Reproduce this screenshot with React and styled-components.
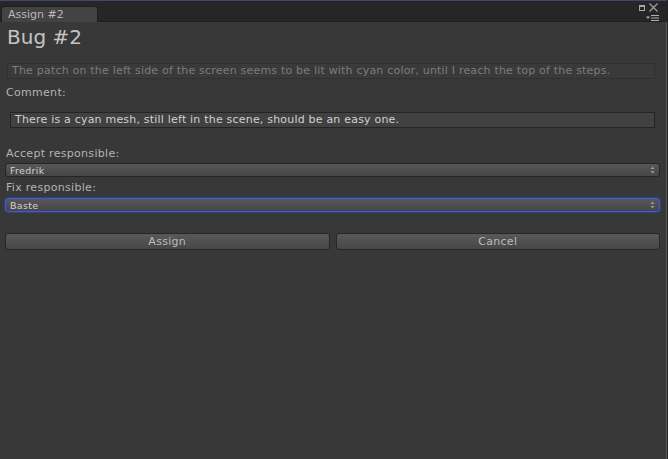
import React from "react";
import styled, { createGlobalStyle } from "styled-components";

const Global = createGlobalStyle`
  html, body { margin: 0; padding: 0; background: #383838; }
  body { font-family: "DejaVu Sans", Verdana, sans-serif; }
  * { box-sizing: border-box; }
`;

const Window = styled.div`
  width: 668px;
  height: 459px;
  display: flex;
  flex-direction: column;
  background: #383838;
  border-right: 1px solid #232323;
  overflow: hidden;
`;

const TopBar = styled.div`
  height: 22px;
  flex: none;
  display: flex;
  align-items: flex-end;
  justify-content: space-between;
  background: #262626;
  border-top: 1px solid #3b4a66;
  border-bottom: 1px solid #1f1f1f;
  padding-left: 1px;
`;

const Tab = styled.div`
  width: 97px;
  height: 16px;
  background: #434343;
  border: 1px solid #1e1e1e;
  border-bottom: none;
  border-radius: 3px 3px 0 0;
  color: #b8b8b8;
  font-size: 11px;
  line-height: 15px;
  padding-left: 6px;
  margin-bottom: -1px;
`;

const WinIcons = styled.div`
  align-self: stretch;
  width: 34px;
  position: relative;
`;

const IconSvg = styled.svg`
  position: absolute;
  left: ${(p) => p.$x}px;
  top: ${(p) => p.$y}px;
`;

const Content = styled.div`
  flex: 1;
  display: flex;
  flex-direction: column;
  padding: 3px 6px 0 5px;
  border-right: 1px solid #5a5a5a;
`;

const Title = styled.div`
  color: #c4c4c4;
  font-size: 20px;
  line-height: 24px;
  padding-left: 2px;
  margin-bottom: 14px;
`;

const Field = styled.div`
  height: 16px;
  margin-left: ${(p) => p.$indent}px;
  margin-right: 5px;
  background: ${(p) => (p.$disabled ? "#3a3a3a" : "#414141")};
  border: 1px solid ${(p) => (p.$disabled ? "#303030" : "#242424")};
  color: ${(p) => (p.$disabled ? "#7c7c7c" : "#d0d0d0")};
  font-size: 11px;
  line-height: 14px;
  padding-left: 4px;
  white-space: nowrap;
  overflow: hidden;
  letter-spacing: 0.2px;
`;

const Label = styled.div`
  color: #b4b4b4;
  font-size: 11px;
  line-height: 13px;
  padding-left: 1px;
  margin-top: ${(p) => p.$top}px;
  margin-bottom: ${(p) => p.$bottom}px;
  letter-spacing: 0.3px;
`;

const Popup = styled.div`
  height: 14px;
  display: flex;
  align-items: center;
  justify-content: space-between;
  border-radius: 3px;
  background: linear-gradient(#575757, #464646);
  border: 1px solid ${(p) => (p.$focus ? "#3a5ae0" : "#242424")};
  box-shadow: ${(p) => (p.$focus ? "0 0 0 0.5px #2f4bc0" : "none")};
  color: #d2d2d2;
  font-size: 9.5px;
  padding: 0 4px 0 4px;
  letter-spacing: 0.3px;
`;

const Arrows = styled.svg`
  flex: none;
`;

const Buttons = styled.div`
  display: grid;
  grid-template-columns: 1fr 1fr;
  gap: 6px;
  margin-top: 21px;
`;

const Button = styled.div`
  height: 17px;
  display: flex;
  align-items: center;
  justify-content: center;
  border-radius: 3px;
  background: linear-gradient(#595959, #474747);
  border: 1px solid #262626;
  color: #bcbcbc;
  font-size: 11px;
  letter-spacing: 0.3px;
`;

function UpDown() {
  return (
    <Arrows width="5" height="8" viewBox="0 0 5 8">
      <path d="M2.5 0.5 L4.5 3 L0.5 3 Z" fill="#9a9a9a" />
      <path d="M2.5 7.5 L4.5 5 L0.5 5 Z" fill="#9a9a9a" />
    </Arrows>
  );
}

export default function App() {
  return (
    <>
      <Global />
      <Window>
        <TopBar>
          <Tab>Assign #2</Tab>
          <WinIcons>
            <IconSvg $x={6} $y={4} width="6" height="6" viewBox="0 0 6 6">
              <rect x="0.5" y="0.5" width="5" height="5" fill="none" stroke="#a8a8a8" />
              <rect x="0" y="0" width="6" height="2" fill="#a8a8a8" />
            </IconSvg>
            <IconSvg $x={16} $y={2} width="9" height="9" viewBox="0 0 9 9">
              <path d="M0.5 0.5 L8.5 8.5 M8.5 0.5 L0.5 8.5" stroke="#a0a0a0" strokeWidth="1.2" />
            </IconSvg>
            <IconSvg $x={13} $y={14} width="13" height="6" viewBox="0 0 13 6">
              <path d="M0 1.5 L4 1.5 L2 4 Z" fill="#b0b0b0" />
              <rect x="5" y="0" width="8" height="1" fill="#b0b0b0" />
              <rect x="5" y="2.5" width="8" height="1" fill="#b0b0b0" />
              <rect x="5" y="5" width="8" height="1" fill="#b0b0b0" />
            </IconSvg>
          </WinIcons>
        </TopBar>
        <Content>
          <Title>Bug #2</Title>
          <Field $disabled $indent={2}>
            The patch on the left side of the screen seems to be lit with cyan color, until I reach the top of the steps.
          </Field>
          <Label $top={7} $bottom={13}>Comment:</Label>
          <Field $indent={5}>
            There is a cyan mesh, still left in the scene, should be an easy one.
          </Field>
          <Label $top={19} $bottom={3}>Accept responsible:</Label>
          <Popup>
            <span>Fredrik</span>
            <UpDown />
          </Popup>
          <Label $top={4} $bottom={4}>Fix responsible:</Label>
          <Popup $focus>
            <span>Baste</span>
            <UpDown />
          </Popup>
          <Buttons>
            <Button>Assign</Button>
            <Button>Cancel</Button>
          </Buttons>
        </Content>
      </Window>
    </>
  );
}
